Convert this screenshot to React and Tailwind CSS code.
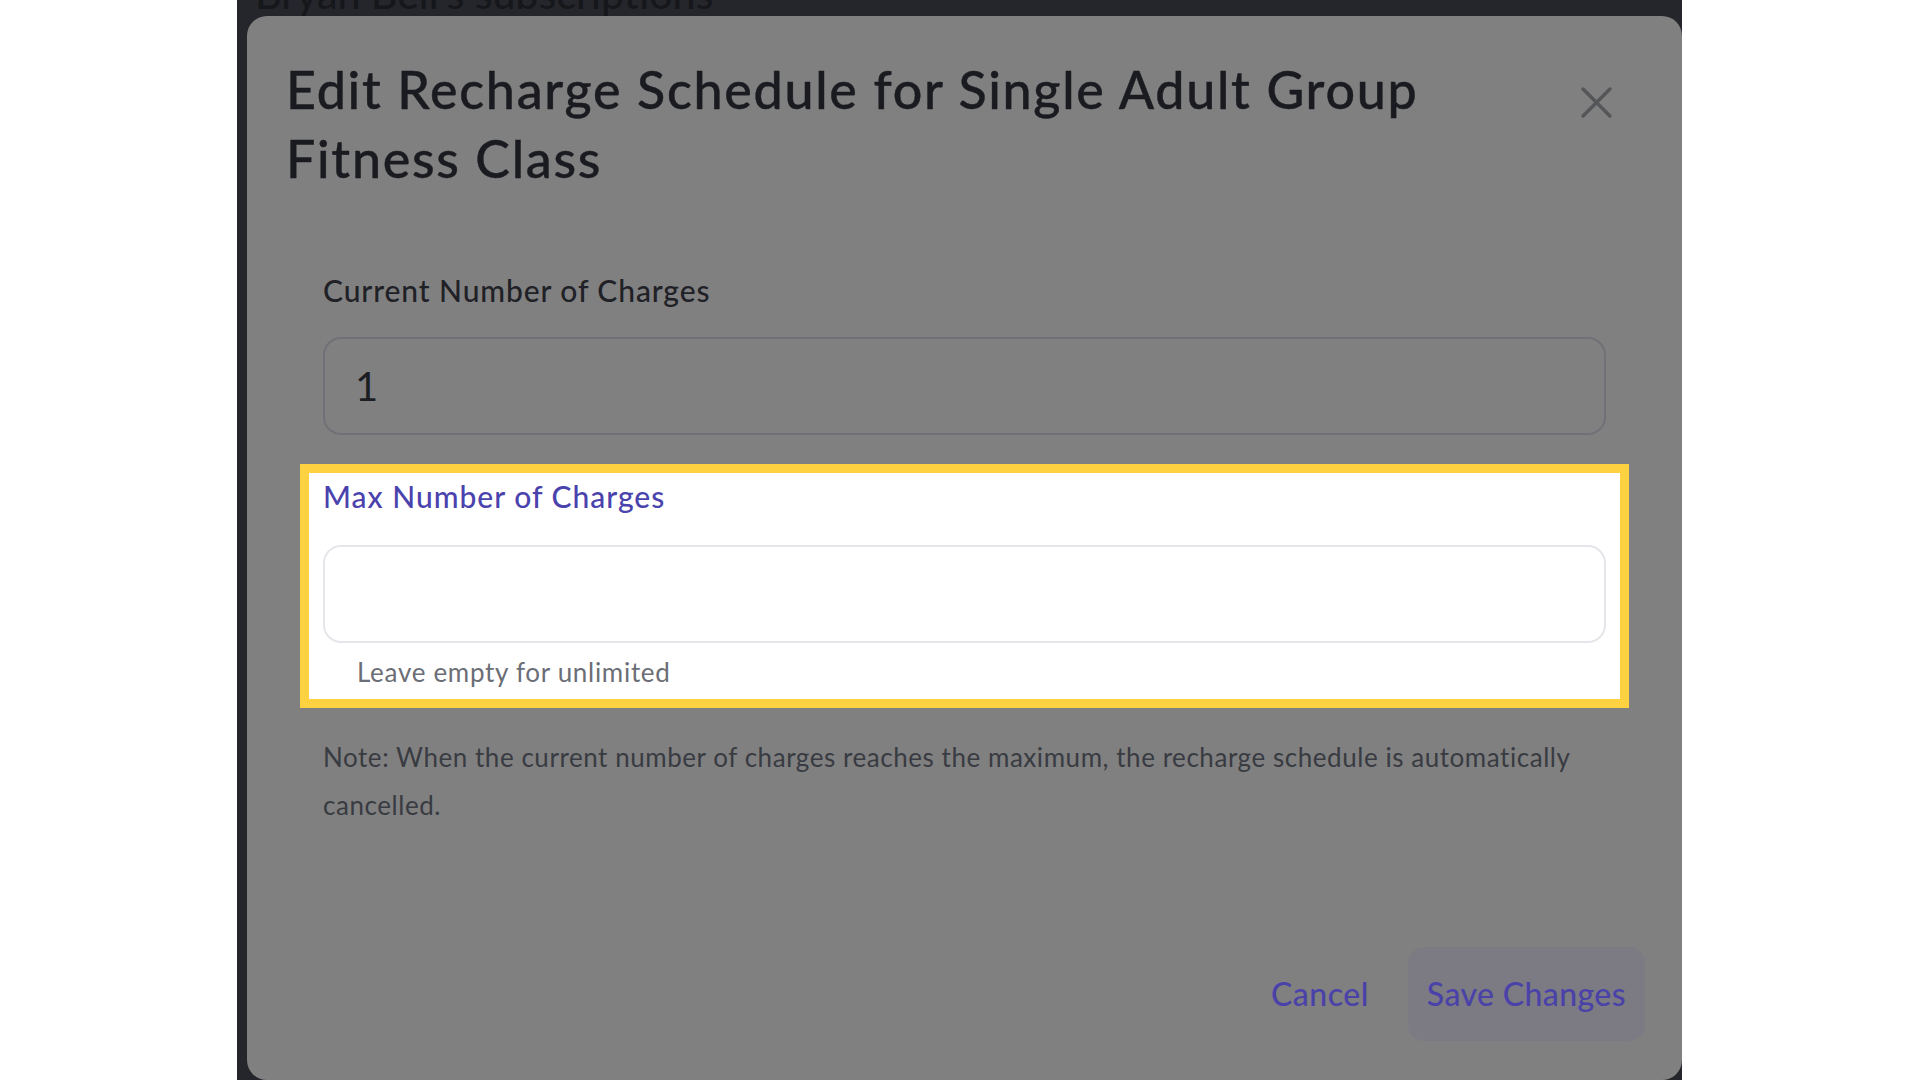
import React from "react";

const font = { fontFamily: "Lato, 'Noto Sans', sans-serif" };

function CloseIcon() {
  return (
    <svg width="31" height="31" viewBox="0 0 30 30" fill="none">
      <path
        d="M2 2L28 28M28 2L2 28"
        stroke="#555659"
        strokeWidth="3.4"
        strokeLinecap="round"
      />
    </svg>
  );
}

function Field({ label, value }) {
  return (
    <div>
      <div className="text-[30px] leading-[36px] font-medium text-[#202127] tracking-[0.9px]">
        {label}
      </div>
      <input
        readOnly
        value={value}
        className="mt-[29px] block h-[98px] w-full rounded-[18px] border-2 border-[#6f7176] bg-transparent pl-[30px] text-[40px] text-[#1d1e23] outline-none"
      />
    </div>
  );
}

export default function App() {
  return (
    <div className="flex h-[1080px] w-[1920px] overflow-hidden bg-white" style={font}>
      <div className="ml-[237px] flex w-[1445px] flex-col bg-[#25262b]">
        <div className="h-[16px] overflow-hidden pl-[18px]">
          <div className="-mt-[28px] text-[41px] font-medium leading-[44px] text-[#16171b]">
            Bryan Bell's subscriptions
          </div>
        </div>
        <div className="ml-[10px] flex flex-1 flex-col rounded-[20px] bg-[#808080]">
          <div className="flex items-start justify-between pl-[39px] pr-[70px] pt-[39px]">
            <h2 className="text-[52px] font-medium leading-[69px] tracking-[1.7px] text-[#1a1b20] [-webkit-text-stroke:0.4px_#1a1b20]">
              Edit Recharge Schedule for Single Adult Group
              <br />
              Fitness Class
            </h2>
            <button className="mt-[32px]">
              <CloseIcon />
            </button>
          </div>

          <div className="px-[76px] pt-[79px]">
            <Field label="Current Number of Charges" value="1" />

            <div className="-mx-[23px] mt-[29px] border-[9px] border-[#fed140] bg-white px-[14px] pb-[11px] pt-[5px]">
              <div className="text-[30px] leading-[36px] font-medium tracking-[1px] text-[#4b43ad]">
                Max Number of Charges
              </div>
              <input
                className="mt-[31px] block h-[98px] w-full rounded-[18px] border-2 border-[#e4e6ea] bg-white pl-[30px] text-[40px] outline-none"
              />
              <div className="mt-[13px] pl-[34px] text-[26px] leading-[32px] tracking-[0.7px] text-[#6b6e76]">
                Leave empty for unlimited
              </div>
            </div>

            <p className="mt-[25px] text-[26px] leading-[48px] tracking-[0.55px] text-[#393b42]">
              Note: When the current number of charges reaches the maximum, the recharge schedule is automatically
              cancelled.
            </p>
          </div>

          <div className="mt-[118px] flex justify-end gap-[20px] pr-[37px]">
            <button className="h-[94px] rounded-[16px] px-[19px] text-[32px] font-medium tracking-[0.5px] text-[#4a42a8]">
              Cancel
            </button>
            <button className="h-[94px] rounded-[16px] bg-[#7c7b83] px-[19px] text-[32px] font-medium tracking-[0.4px] text-[#4a42a8]">
              Save Changes
            </button>
          </div>
        </div>
      </div>
    </div>
  );
}
